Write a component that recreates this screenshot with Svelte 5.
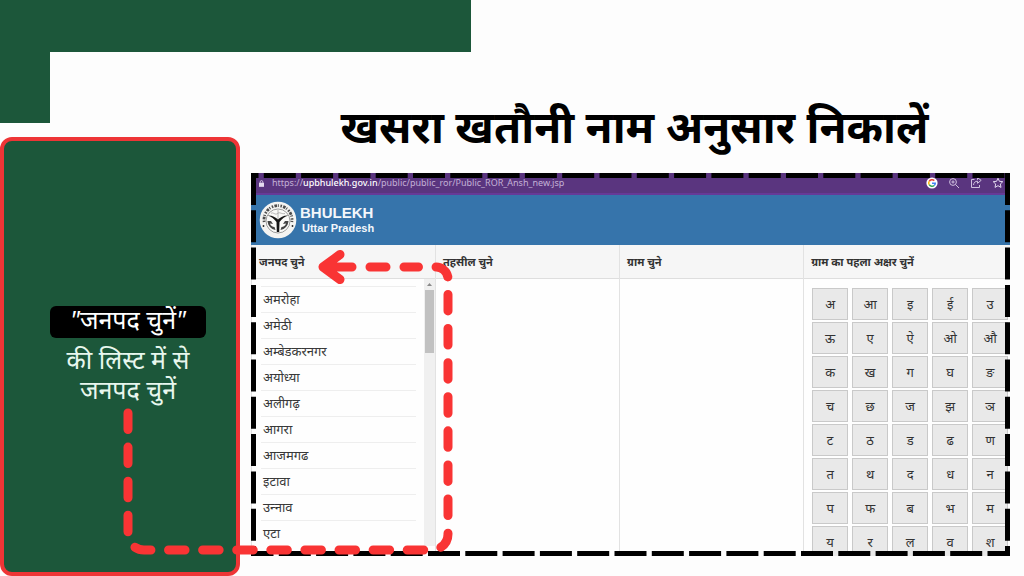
<script>
  const districts = ['अमरोहा', 'अमेठी', 'अम्बेडकरनगर', 'अयोध्या', 'अलीगढ़', 'आगरा', 'आजमगढ', 'इटावा', 'उन्\u200Dनाव', 'एटा'];
  const letters = 'अ आ इ ई उ ऊ ए ऐ ओ औ क ख ग घ ङ च छ ज झ ञ ट ठ ड ढ ण त थ द ध न प फ ब भ म य र ल व श'.split(' ');
</script>

<div class="page">
  <div class="band"></div>

  <aside>
    <div class="stub"></div>
    <div class="panel">
      <p><mark><i>"</i>जनपद चुनें<i>"</i></mark></p>
      <p>की लिस्ट में से</p>
      <p>जनपद चुनें</p>
    </div>
  </aside>

  <main>
    <h1>खसरा खतौनी नाम अनुसार निकालें</h1>

    <div class="browser">
      <div class="address">
        <svg class="lock" viewBox="0 0 6 8" aria-hidden="true">
          <path d="M1.5 3V2a1.5 1.5 0 0 1 3 0v1" fill="none" stroke="#e6dcf0" />
          <rect y="3" width="6" height="5" fill="#e6dcf0" />
        </svg>
        <span class="url">https://<b>upbhulekh.gov.in</b>/public/public_ror/Public_ROR_Ansh_new.jsp</span>
        <div class="tools">
          <button aria-label="Google">
            <svg viewBox="0 0 12 12">
              <circle cx="6" cy="6" r="5.6" fill="#fff" />
              <g fill="none" stroke-width="1.5">
                <path d="M8.3 3.6A3.3 3.3 0 0 0 3.2 4.3" stroke="#ea4335" />
                <path d="M3.2 4.3a3.3 3.3 0 0 0 0 3.4" stroke="#fbbc05" />
                <path d="M3.2 7.7a3.3 3.3 0 0 0 5 .8" stroke="#34a853" />
                <path d="M8.2 8.5a3.3 3.3 0 0 0 1.1-2.3H6" stroke="#4285f4" />
              </g>
            </svg>
          </button>
          <button aria-label="Zoom">
            <svg viewBox="0 0 12 12" fill="none" stroke="#cfc0df">
              <circle cx="5" cy="5" r="3.4" /><path d="M7.6 7.6L11 11M3.4 5h3.2M5 3.4v3.2" />
            </svg>
          </button>
          <button aria-label="Share">
            <svg viewBox="0 0 12 12" fill="none" stroke="#cfc0df" stroke-linejoin="round">
              <path d="M4.5 2.5H1.5v8h8V8M3.5 8c.3-2.600 1.700-3.700 4-3.800V6.300L11.200 3.300 7.500.8v2" />
            </svg>
          </button>
          <button aria-label="Favourite">
            <svg viewBox="0 0 12 12" fill="none" stroke="#e3d9ee" stroke-linejoin="round">
              <path d="M6 1.200l1.400 3.100 3.400.4-2.500 2.300.7 3.400L6 8.700 3 10.400l.7-3.400L1.200 4.700l3.400-.4z" />
            </svg>
          </button>
        </div>
      </div>

      <header>
        <svg class="seal" viewBox="0 0 38 38" aria-hidden="true">
          <circle cx="19" cy="19" r="18.300" fill="#f4f4f2" />
          <path d="M5.200 21a14 14 0 1 1 27.600 0" fill="none" stroke="#4c4c4c" stroke-width="2.800" stroke-dasharray="1.500 1.200 2.600 .9 1 1.700" />
          <circle cx="19" cy="20" r="12" fill="#fafaf8" stroke="#777" stroke-width=".7" />
          <path d="M8.500 14.500c4-.5 8 1.500 10.500 4 2.500-2.500 6.500-4.500 10.500-4-3.800 1.200-7 3.500-9 6.500L20.200 31h-2.400l-.3-10c-2-3-5.200-5.300-9-6.500z" fill="#151515" />
          <path d="M8.500 20c.5 5 3.500 8 8 9l-1-3c-2 0-4-1.500-4.500-3.500l3 .5-2-3zM29.500 20c-.5 5-3.500 8-8 9l1-3c2 0 4-1.500 4.500-3.500l-3 .5 2-3z" fill="#444" />
          <path d="M12 12.500c2-2 4 2 6.500 0s4 1 7.500 0M19 9v9" fill="none" stroke="#999" stroke-width=".7" />
          <circle cx="4.500" cy="25" r=".9" fill="#222" /><circle cx="33.500" cy="25" r=".9" fill="#222" />
        </svg>
        <div>
          <div class="brand">BHULEKH</div>
          <div class="state">Uttar Pradesh</div>
        </div>
      </header>

      <div class="columns">
        <section>
          <h2>जनपद चुने</h2>
          <div class="scroller">
            <ul>
              {#each districts as name}
                <li><button>{name}</button></li>
              {/each}
            </ul>
            <div class="track">
              <svg viewBox="0 0 11 11" aria-hidden="true"><path d="M3 7l2.500-3L8 7z" fill="#8a8a8a" /></svg>
              <div class="thumb"></div>
            </div>
          </div>
        </section>
        <section><h2>तहसील चुने</h2></section>
        <section><h2>ग्राम चुने</h2></section>
        <section>
          <h2>ग्राम का पहला अक्षर चुनें</h2>
          <div class="keys">
            {#each letters as letter}
              <button>{letter}</button>
            {/each}
          </div>
        </section>
      </div>

      <svg class="frame" aria-hidden="true">
        <g stroke="#000" stroke-width="10" stroke-dasharray="32 5.300">
          <line x1="0" y1="0" x2="100%" y2="0" stroke-dashoffset="24.500" />
          <line x1="0" y1="100%" x2="100%" y2="100%" stroke-dashoffset="9.500" />
          <line x1="0" y1="0" x2="0" y2="100%" />
          <line x1="100%" y1="0" x2="100%" y2="100%" />
        </g>
      </svg>
    </div>
  </main>

  <svg class="arrow" viewBox="0 0 1024 576" aria-hidden="true">
    <g fill="none" stroke="#f93434" stroke-width="9" stroke-linecap="round" stroke-linejoin="round">
      <path d="M128 413V534A16 16 0 0 0 144 550H432A16 16 0 0 0 448 534V279A12 12 0 0 0 436 267H404" stroke-dasharray="16.500 17.600" />
      <path d="M386 267H370M352 267H324M340 254.500L323 267 340 279.500" />
    </g>
  </svg>
</div>

<style>
  :global(body) {
    margin: 0;
  }
  .page {
    position: relative;
    display: grid;
    grid-template-columns: 240px minmax(0, 1fr);
    grid-template-rows: 52px minmax(0, 1fr);
    height: 100vh;
    overflow: hidden;
    background: #fdfdfd;
    color: #000;
    font-family: "Noto Sans", "Noto Sans Devanagari", sans-serif;
  }
  button {
    margin: 0;
    padding: 0;
    border: 0;
    background: none;
    color: inherit;
    font: inherit;
  }
  .band {
    grid-column: 1 / -1;
    width: 46%;
    background: #1c573a;
  }
  aside {
    display: flex;
    flex-direction: column;
    gap: 14px;
  }
  .stub {
    flex: none;
    width: 50px;
    height: 71px;
    background: #1c573a;
  }
  .panel {
    flex: 1;
    display: flex;
    flex-direction: column;
    align-items: center;
    box-sizing: border-box;
    padding: 165px 0 0 16px;
    border: 4px solid #ee3536;
    border-radius: 12px;
    background: #1c573a;
    color: #e8f7ee;
    font-size: 25px;
    line-height: 30px;
  }
  .panel p {
    margin: 0;
    white-space: nowrap;
  }
  mark {
    display: block;
    margin-bottom: 6px;
    padding: 0 20px 6px;
    border-radius: 6px;
    background: #000;
    color: #fff;
    line-height: 26px;
  }
  main {
    display: flex;
    flex-direction: column;
    padding: 42px 14px 20px 11px;
  }
  h1 {
    margin: 0;
    height: 79px;
    padding-left: 8px;
    font-size: 44px;
    line-height: 64px;
    text-align: center;
    white-space: nowrap;
  }
  .browser {
    position: relative;
    flex: 1;
    min-height: 0;
    display: flex;
    flex-direction: column;
    overflow: hidden;
    background: #fefefe;
  }
  .address {
    flex: none;
    display: flex;
    align-items: center;
    height: 20px;
    padding: 0 6px 0 8px;
    border-bottom: 2px solid #663a98;
    background: #5a357f;
    color: #c3b1d6;
    font: 9px/12px "Noto Sans", sans-serif;
  }
  .address b {
    color: #fff;
    font-weight: 500;
  }
  .lock {
    width: 5px;
    height: 7px;
    margin-right: 8px;
  }
  .tools {
    display: flex;
    gap: 10px;
    margin-left: auto;
  }
  .tools svg {
    display: block;
    width: 12px;
    height: 12px;
  }
  header {
    flex: none;
    display: flex;
    align-items: center;
    gap: 3px;
    height: 50px;
    padding-left: 8px;
    background: #3674ab;
    color: #f3f7fb;
    font-family: "Liberation Sans", sans-serif;
    font-weight: bold;
  }
  .seal {
    width: 38px;
    height: 38px;
  }
  .brand {
    font-size: 15px;
    line-height: 16px;
  }
  .state {
    padding-left: 2px;
    font-size: 11px;
    line-height: 14px;
  }
  .columns {
    flex: 1;
    min-height: 0;
    display: grid;
    grid-template-columns: repeat(3, 24.25%) minmax(0, 1fr);
  }
  section {
    overflow: hidden;
    border-left: 1px solid #e2e2e2;
  }
  h2 {
    margin: 0;
    padding-left: 7px;
    border-bottom: 1px solid #dedede;
    background: #f6f6f6;
    color: #333;
    font-size: 11px;
    line-height: 33px;
    white-space: nowrap;
  }
  .scroller {
    display: flex;
    justify-content: space-between;
  }
  ul {
    flex: 1;
    margin: 7px 8px 0 9px;
    padding: 0;
    list-style: none;
  }
  li {
    height: 25px;
    padding-left: 2px;
    border-top: 1px solid #eee;
    color: #383838;
    font-size: 13px;
    line-height: 25px;
  }
  .track {
    width: 11px;
    background: #f0f0f0;
  }
  .track svg {
    display: block;
    width: 11px;
    height: 11px;
  }
  .thumb {
    height: 63px;
    margin: 0 1px;
    background: #c1c1c1;
  }
  .keys {
    display: grid;
    grid-template-columns: repeat(5, 36px);
    grid-auto-rows: 32px;
    gap: 2px 4px;
    padding: 9px 8px;
  }
  .keys button {
    border: 1px solid #c9c9c9;
    background: #e9e9e9;
    color: #333;
    font-size: 13px;
    line-height: 24px;
  }
  .frame {
    position: absolute;
    inset: 0;
    width: 100%;
    height: 100%;
    pointer-events: none;
  }
  .arrow {
    position: absolute;
    inset: 0;
    width: 100%;
    height: 100%;
    pointer-events: none;
  }
</style>
